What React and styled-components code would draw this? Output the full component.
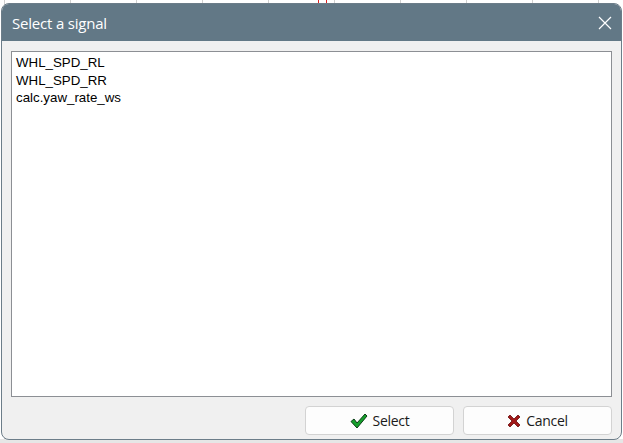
import styled, { createGlobalStyle } from 'styled-components'

const Global = createGlobalStyle`
    html, body {
        margin: 0;
        padding: 0;
        background: #ffffff;
    }
    body {
        width: 623px;
        height: 443px;
        overflow: hidden;
        font-family: "Open Sans", "Noto Sans", sans-serif;
    }
`

const Desk = styled.div`
    position: relative;
    width: 623px;
    height: 443px;
    overflow: hidden;
    background-color: #ffffff;
    background-image:
        linear-gradient(to right, #d0d0d0 1px, transparent 1px);
    background-size: 66px 100%;
    background-position: 4px 0;
`

const Marker = styled.div`
    position: absolute;
    left: 318px;
    top: -2px;
    width: 7px;
    height: 4px;
    border: 1px solid #e02020;
`

const BottomStrip = styled.div`
    position: absolute;
    left: 0;
    right: 0;
    bottom: 0;
    height: 4px;
    background: #e6e6e6;
`

const Dialog = styled.div`
    position: absolute;
    left: 1px;
    top: 3px;
    width: 621px;
    height: 437px;
    display: flex;
    flex-direction: column;
    background: #f0f0f0;
    border: 1px solid #6c7d89;
    border-radius: 8px;
    overflow: hidden;
    box-sizing: border-box;
    z-index: 1;
`

const TitleBar = styled.div`
    height: 37px;
    flex: none;
    display: flex;
    align-items: center;
    justify-content: space-between;
    background: #627886;
    color: #ffffff;
    padding: 0 8px 0 10px;
`

const Title = styled.span`
    font-size: 15px;
    letter-spacing: -0.2px;
`

const Close = styled.div`
    width: 16px;
    height: 16px;
    display: flex;
    align-items: center;
    justify-content: center;
`

const Body = styled.div`
    flex: 1;
    display: flex;
    flex-direction: column;
    padding: 10px 9px 5px 9px;
    gap: 9px;
`

const List = styled.div`
    height: 346px;
    background: #ffffff;
    border: 1px solid #8c8f94;
    box-sizing: border-box;
    padding: 2px 4px;
    font-family: "Liberation Sans", Arial, sans-serif;
    font-size: 13.3px;
    color: #000000;
`

const Item = styled.div`
    height: 17.5px;
    line-height: 17.5px;
`

const Footer = styled.div`
    display: flex;
    justify-content: flex-end;
    gap: 9px;
`

const Button = styled.button`
    width: 149px;
    height: 29px;
    display: flex;
    align-items: center;
    justify-content: center;
    gap: 5px;
    background: #fdfdfd;
    border: 1px solid #d3d3d3;
    border-radius: 4px;
    font-family: "Open Sans", "Noto Sans", sans-serif;
    font-size: 14px;
    letter-spacing: -0.3px;
    color: #1a1a1a;
    padding: 0;
`

const Check = () => (
    <svg width="18" height="16" viewBox="0 0 18 16">
        <path d="M1 8.5 L4 6 L7 10 L15 1 L17 3 L7 15 Z" fill="#16a02c" stroke="#0b3d16" strokeWidth="1" strokeLinejoin="round" />
    </svg>
)

const Cross = () => (
    <svg width="14" height="14" viewBox="0 0 14 14">
        <path d="M1 3 L3 1 L7 5 L11 1 L13 3 L9 7 L13 11 L11 13 L7 9 L3 13 L1 11 L5 7 Z" fill="#a01818" stroke="#6a0c0c" strokeWidth="0.8" strokeLinejoin="round" />
    </svg>
)

const signals = ['WHL_SPD_RL', 'WHL_SPD_RR', 'calc.yaw_rate_ws']

const App = () => {
    return (
        <Desk>
            <Global />
            <Marker />
            <BottomStrip />
            <Dialog>
                <TitleBar>
                    <Title>Select a signal</Title>
                    <Close>
                        <svg width="14" height="14" viewBox="0 0 14 14">
                            <path d="M1 1 L13 13 M13 1 L1 13" stroke="#ffffff" strokeWidth="1.2" />
                        </svg>
                    </Close>
                </TitleBar>
                <Body>
                    <List>
                        {signals.map(s => (
                            <Item key={s}>{s}</Item>
                        ))}
                    </List>
                    <Footer>
                        <Button><Check />Select</Button>
                        <Button><Cross />Cancel</Button>
                    </Footer>
                </Body>
            </Dialog>
        </Desk>
    )
}

export default App
